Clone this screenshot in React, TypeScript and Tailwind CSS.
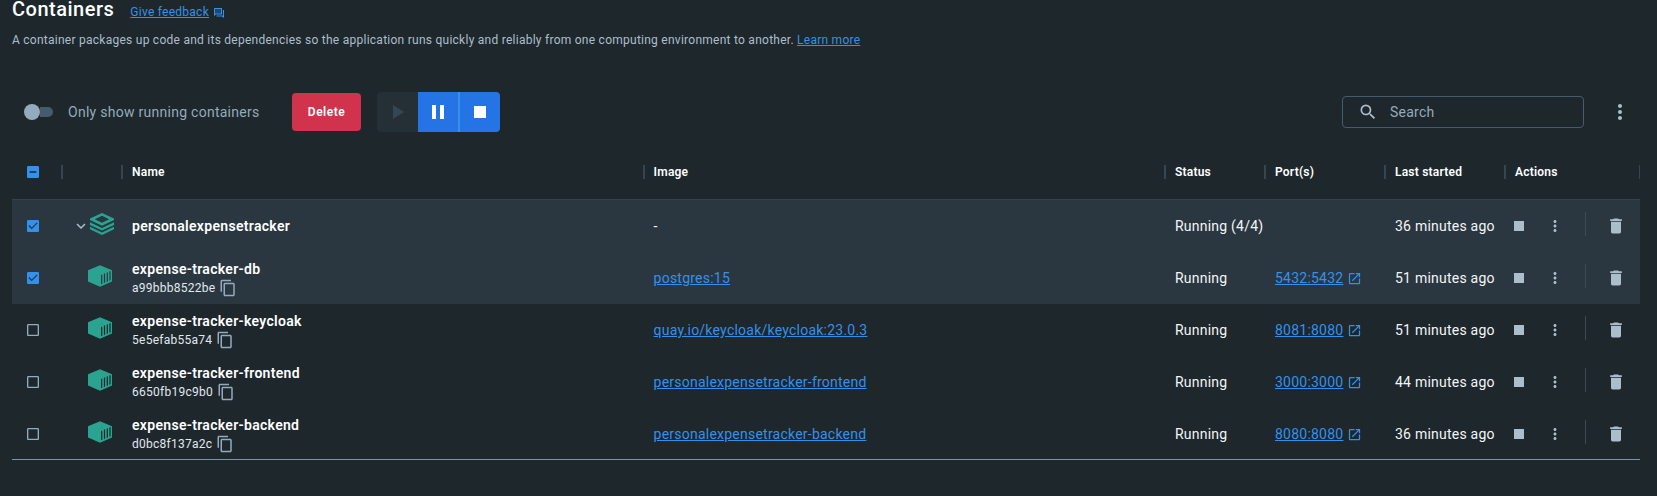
import type { ReactNode } from "react";
import {
  MdContentCopy,
  MdDelete,
  MdKeyboardArrowDown,
  MdMoreVert,
  MdOpenInNew,
  MdPause,
  MdPlayArrow,
  MdSearch,
  MdStop,
} from "react-icons/md";

type CheckState = "on" | "off" | "mixed";

interface Row {
  name: string;
  id?: string;
  image?: string;
  status: string;
  port?: string;
  started: string;
  checked: boolean;
}

const rows: Row[] = [
  { name: "personalexpensetracker", status: "Running (4/4)", started: "36 minutes ago", checked: true },
  { name: "expense-tracker-db", id: "a99bbb8522be", image: "postgres:15", status: "Running", port: "5432:5432", started: "51 minutes ago", checked: true },
  { name: "expense-tracker-keycloak", id: "5e5efab55a74", image: "quay.io/keycloak/keycloak:23.0.3", status: "Running", port: "8081:8080", started: "51 minutes ago", checked: false },
  { name: "expense-tracker-frontend", id: "6650fb19c9b0", image: "personalexpensetracker-frontend", status: "Running", port: "3000:3000", started: "44 minutes ago", checked: false },
  { name: "expense-tracker-backend", id: "d0bc8f137a2c", image: "personalexpensetracker-backend", status: "Running", port: "8080:8080", started: "36 minutes ago", checked: false },
];

const columns = "grid grid-cols-[50px_60px_521.6px_521.4px_100px_120px_120px_135px]";

function Checkbox({ state }: { state: CheckState }) {
  if (state === "off") {
    return (
      <svg viewBox="0 0 24 24" className="size-4 text-[#94abbc]" fill="currentColor">
        <path d="M19 5v14H5V5h14m0-2H5c-1.1 0-2 .9-2 2v14c0 1.1.9 2 2 2h14c1.1 0 2-.9 2-2V5c0-1.1-.9-2-2-2z" />
      </svg>
    );
  }
  return (
    <svg viewBox="0 0 24 24" className="size-4 text-[#3391ee]" fill="currentColor">
      {state === "on" ? (
        <path d="M19 3H5c-1.11 0-2 .9-2 2v14c0 1.1.89 2 2 2h14c1.11 0 2-.9 2-2V5c0-1.1-.89-2-2-2zm-9 14l-5-5 1.41-1.41L10 14.17l7.59-7.59L19 8l-9 9z" />
      ) : (
        <path d="M19 3H5c-1.1 0-2 .9-2 2v14c0 1.1.9 2 2 2h14c1.1 0 2-.9 2-2V5c0-1.1-.9-2-2-2zm-2 10H7v-2h10v2z" />
      )}
    </svg>
  );
}

function StackIcon() {
  return (
    <svg viewBox="0 0 24 22" className="h-[22px] w-6 text-[#2aa391]" fill="currentColor">
      <path fillRule="evenodd" d="M12 0 24 5.4V7L12 12.8 0 7V5.4ZM12 2.7 4.8 6.2 12 9.7l7.2-3.5Z" />
      <path d="M0 9.3 12 15 24 9.3v2.6l-12 5.7L0 11.9Z" />
      <path d="M0 13.8 12 19.5l12-5.7v2.5L12 22 0 16.3Z" />
    </svg>
  );
}

function ContainerIcon() {
  return (
    <svg viewBox="0 0 24 22" className="h-[22px] w-6 text-[#2aa391]" fill="currentColor">
      <path
        fillRule="evenodd"
        d="M12 .2 24 5.2v11.4L12 21.8 0 16.6V5.2ZM13.1 9.9v9.4l1.2-.5V9.4ZM15.9 8.8v9.3l1.2-.5V8.3ZM18.7 7.7v9.2l1.2-.5V7.2ZM21.4 6.6v9.1l1.2-.5V6.1Z"
      />
    </svg>
  );
}

function FeedbackIcon() {
  return (
    <svg viewBox="0 0 10 10" className="size-2.5" fill="currentColor">
      <path opacity=".3" d="M1 1h6.500v5H1z" />
      <path fillRule="evenodd" d="M.5 0h7.500v6.500H2L0 8V.5ZM1 1v4.500h6V1Z" />
      <path d="M9 2h1v8L8 8.500H2.500v-1H9Z" />
    </svg>
  );
}

function HeaderCell({ children, last = false }: { children?: ReactNode; last?: boolean }) {
  return (
    <div className="flex h-full items-center justify-between pl-2.5 text-xs font-semibold tracking-[0.22px] text-white">
      <span>{children}</span>
      <span className={last ? "h-3.5 w-px bg-[#364650]" : "-mr-px h-3.5 w-0.5 bg-[#364650]"} />
    </div>
  );
}

function TableRow({ row }: { row: Row }) {
  return (
    <div className={`${columns} h-[52px] items-center ${row.checked ? "bg-[#2a3740]" : ""}`}>
      <div className="pl-[13px]">
        <Checkbox state={row.checked ? "on" : "off"} />
      </div>
      <div className="flex items-center">
        {row.id ? (
          <div className="-mt-1 ml-[26px]"><ContainerIcon /></div>
        ) : (
          <>
            <MdKeyboardArrowDown className="ml-2.5 size-[18px] text-[#adbecb]" />
            <div className="-mt-1"><StackIcon /></div>
          </>
        )}
      </div>
      <div className="pl-2.5">
        <div className="text-sm leading-5 font-semibold tracking-[0.31px] text-white">{row.name}</div>
        {row.id && (
          <div className="flex h-[18px] items-center gap-1 text-xs tracking-[0.26px] text-[#e1e8ed]">
            {row.id}
            <MdContentCopy className="size-[18px] text-[#94abbc]" />
          </div>
        )}
      </div>
      <div className="pl-2.5">
        {row.image ? <a className="text-[#3391ee] underline">{row.image}</a> : "-"}
      </div>
      <div className="pl-2.5 whitespace-nowrap">{row.status}</div>
      <div className="flex items-center gap-1 pl-2.5 text-[#3391ee]">
        {row.port && (
          <>
            <a className="underline">{row.port}</a>
            <MdOpenInNew className="size-[15px]" />
          </>
        )}
      </div>
      <div className="pl-2.5 whitespace-nowrap">{row.started}</div>
      <div className="flex items-center text-[#adbecb]">
        <MdStop className="ml-1 size-5" />
        <MdMoreVert className="ml-[17px] size-[18px]" />
        <span className="-mt-1 ml-[21px] h-6 w-px bg-[#3c4a54]" />
        <MdDelete className="ml-5 size-5" />
      </div>
    </div>
  );
}

export default function App() {
  return (
    <div className="h-[496px] overflow-hidden bg-[#1d272c] pl-3 font-['Roboto',sans-serif] text-sm tracking-[0.23px] text-[#f3f5f7]">
      <header className="flex h-[26px] items-start">
        <h1 className="text-xl leading-[18px] font-medium tracking-[0.5px] text-white">Containers</h1>
        <a className="ml-4 flex items-center gap-[5px] pt-1 text-xs tracking-[0.26px] text-[#3391ee]">
          <span className="underline">Give feedback</span>
          <span className="pt-0.5"><FeedbackIcon /></span>
        </a>
      </header>
      <p className="h-[66px] pt-1.5 text-xs tracking-[0.256px] text-[#adbecb]">
        A container packages up code and its dependencies so the application runs quickly and reliably from one computing environment to another.{" "}
        <a className="text-[#3391ee] underline">Learn more</a>
      </p>

      <div className="flex h-10 w-[1628px] items-center">
        <div className="ml-3 flex w-[29px] items-center">
          <span className="size-4 shrink-0 rounded-full bg-[#94abbc]" />
          <span className="h-2.5 w-[13px] rounded-r-full bg-[#465c6e]" />
        </div>
        <span className="ml-[15px] w-56 tracking-[0.27px] text-[#94abbc]">Only show running containers</span>
        <button className="h-[38px] w-[69px] rounded bg-[#d0334b] text-xs font-semibold tracking-[0.5px] text-white">Delete</button>
        <div className="ml-4 flex h-10 overflow-hidden rounded">
          <span className="flex w-[41px] items-center bg-[#252f36] pl-2 text-[#364650]">
            <MdPlayArrow className="size-6" />
          </span>
          <span className="flex w-[42px] items-center border-r-2 border-[#3391ee] bg-[#2574e5] pl-2 text-white">
            <MdPause className="size-6" />
          </span>
          <span className="flex w-10 items-center justify-center bg-[#2574e5] text-white">
            <MdStop className="size-6" />
          </span>
        </div>
        <div className="ml-auto flex h-8 w-[242px] items-center rounded border border-[#465c6e] pl-[15px] text-[#94abbc]">
          <MdSearch className="size-5 text-[#adbecb]" />
          <span className="ml-3">Search</span>
        </div>
        <MdMoreVert className="mr-2 ml-6 size-6 text-[#adbecb]" />
      </div>

      <section className="mt-[11px] w-[1628px] border-b border-[#7794ab]">
        <div className={`${columns} h-[57px] items-center border-b border-[#364249] pt-0.5`}>
          <div className="flex items-center justify-between pl-[13px]">
            <Checkbox state="mixed" />
            <span className="-mr-px h-3.5 w-0.5 bg-[#364650]" />
          </div>
          <HeaderCell />
          <HeaderCell>Name</HeaderCell>
          <HeaderCell>Image</HeaderCell>
          <HeaderCell>Status</HeaderCell>
          <HeaderCell>Port(s)</HeaderCell>
          <HeaderCell>Last started</HeaderCell>
          <HeaderCell last>Actions</HeaderCell>
        </div>
        <div className="h-[259px] overflow-hidden">
          {rows.map((row) => (
            <TableRow key={row.name} row={row} />
          ))}
        </div>
      </section>
    </div>
  );
}
